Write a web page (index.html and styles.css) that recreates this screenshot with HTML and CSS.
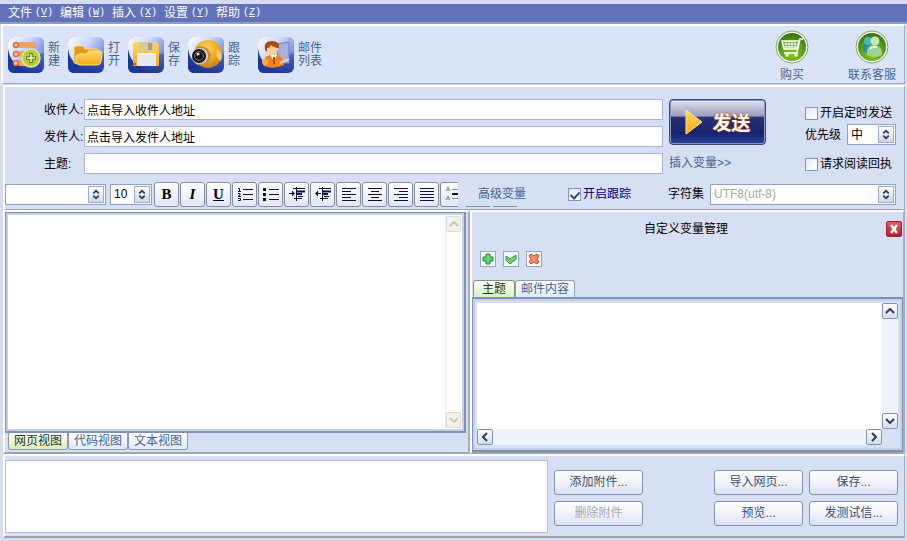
FILE: index.html
```html
<!DOCTYPE html>
<html lang="zh-CN">
<head>
<meta charset="utf-8">
<title>邮件编辑</title>
<link rel="stylesheet" href="styles.css">
</head>
<body>
<svg class="defs" aria-hidden="true">
  <defs>
    <linearGradient id="tile" x1="0.6" y1="0" x2="0.4" y2="1"><stop offset="0" stop-color="#8fa6f0"/><stop offset=".5" stop-color="#3f5cc0"/><stop offset="1" stop-color="#1c3396"/></linearGradient>
    <linearGradient id="shine" x1="0" y1="0" x2="1" y2=".6"><stop offset="0" stop-color="#fff"/><stop offset=".5" stop-color="#ccd6fb"/><stop offset="1" stop-color="#7088dc"/></linearGradient>
    <linearGradient id="gold" x1="0" y1="0" x2="0" y2="1"><stop offset="0" stop-color="#ffd964"/><stop offset="1" stop-color="#f6a915"/></linearGradient>
    <radialGradient id="ball" cx=".45" cy=".3" r=".75"><stop offset="0" stop-color="#ffd75a"/><stop offset=".6" stop-color="#eda21c"/><stop offset="1" stop-color="#b87818"/></radialGradient>
    <radialGradient id="green" cx=".5" cy=".75" r=".8"><stop offset="0" stop-color="#8cc820"/><stop offset=".6" stop-color="#55961a"/><stop offset="1" stop-color="#2f6d10"/></radialGradient>
    <g id="bg"><rect width="36" height="36" fill="url(#tile)"/><path d="M0 0H36V16Q20 18 8 30Q1 22 0 14Z" fill="url(#shine)"/><path d="M0 12Q2 24 10 28L18 36H0Z" fill="#1d3798"/></g>
    <symbol id="spin" viewBox="0 0 8 10"><path d="M1.5 4L4 1.500L6.500 4M1.500 6L4 8.500L6.500 6" fill="none" stroke="#283858" stroke-width="1.600"/></symbol>
  </defs>
</svg>

<nav class="menu">
  <button>文件<span>(<u>V</u>)</span></button>
  <button>编辑<span>(<u>W</u>)</span></button>
  <button>插入<span>(<u>X</u>)</span></button>
  <button>设置<span>(<u>Y</u>)</span></button>
  <button>帮助<span>(<u>Z</u>)</span></button>
</nav>

<header class="toolbar panel">
  <button class="tool">
    <svg viewBox="0 0 36 36"><use href="#bg"/><g fill="#f3a060"><rect x="11" y="5" width="17" height="6" rx="1"/><rect x="11" y="14" width="17" height="6" rx="1"/><rect x="11" y="23" width="15" height="6" rx="1"/></g><g fill="#f8c8a4" stroke="#e2683c" stroke-width="1.500"><circle cx="8" cy="8" r="2.500"/><circle cx="8" cy="17" r="2.500"/><circle cx="8" cy="26" r="2.500"/></g><circle cx="23" cy="21" r="9" fill="#b8cc40" stroke="#e4e99a" stroke-width="1.500"/><path d="M23 16V26M18 21H28" stroke="#577c18" stroke-width="3.500"/><path d="M23 17V25M19 21H27" stroke="#f6fbd0" stroke-width="1.500"/></svg>
    <span>新建</span>
  </button>
  <button class="tool">
    <svg viewBox="0 0 36 36"><use href="#bg"/><path d="M6 26V11Q6 9 8 9H14Q16 9 17 12H29Q31 12 31 15V26Z" fill="#e5991a" stroke="#ffdc74"/><path d="M10 27Q8 27 8 23V19Q9 17 12 17H18L21 14H32Q34 14 34 17L33 25Q32 28 29 28H12Z" fill="url(#gold)" stroke="#ffe07a"/></svg>
    <span>打开</span>
  </button>
  <button class="tool">
    <svg viewBox="0 0 36 36"><use href="#bg"/><path d="M6 5H28L31 8V29H5V6Z" fill="url(#gold)"/><rect x="11" y="5" width="15" height="9" fill="#d8c99a"/><rect x="20" y="6" width="4" height="7" fill="#a79c85"/><rect x="9" y="17" width="19" height="12" fill="#e8e8f0"/><path d="M9 17H28" stroke="#fff" stroke-width="1.500"/><path d="M5 27H8" stroke="#333"/></svg>
    <span>保存</span>
  </button>
  <button class="tool">
    <svg viewBox="0 0 36 36"><use href="#bg"/><circle cx="20" cy="17" r="14" fill="url(#ball)"/><path d="M29 12Q36 15 33 24Q29 22 28 18Z" fill="#f6c860"/><path d="M8 10Q20 7 23 18Q22 28 12 28Z" fill="#c68b35"/><circle cx="12" cy="19" r="8" fill="#d8d1c4"/><circle cx="11" cy="19" r="7" fill="#141418"/><circle cx="11" cy="19" r="4.500" fill="none" stroke="#777"/><circle cx="10" cy="17" r="1.500" fill="#dce4f8"/></svg>
    <span>跟踪</span>
  </button>
  <button class="tool wide">
    <svg viewBox="0 0 36 36"><use href="#bg"/><path d="M19 7L31 5V26H20Z" fill="#a2aee4" stroke="#7080c8"/><path d="M24 10V22M27 9V23" stroke="#cfb8a4"/><path d="M5 27Q5 20 12 18L20 18Q25 20 26 28Q15 33 6 29Z" fill="#ef8424"/><path d="M12 18L16 24L19 18Z" fill="#fff4e0"/><path d="M15 20L17 20L17 27L15 27Z" fill="#b34d13"/><circle cx="14" cy="12" r="6" fill="#ffd195"/><path d="M7 13Q5 4 14 4Q22 4 21 11Q16 11 13 8Q12 11 9 11L9 15Z" fill="#aa4c13"/><circle cx="7" cy="25" r="3" fill="#f7b049"/><path d="M22 26L31 22" stroke="#e5d1bd" stroke-width="2"/></svg>
    <span>邮件列表</span>
  </button>
  <div class="services">
    <a href="#buy"><svg viewBox="0 0 34 34"><circle cx="17" cy="17" r="16" fill="#fff" stroke="#78a858"/><circle cx="17" cy="17" r="14" fill="url(#green)"/><g fill="none" stroke="#fff" stroke-width="1.500"><path d="M28 9H25L22 23H9M7 11H24L22 19H9Z"/><path d="M8 14H23M8 17H23M11 11V19M14 11V19M17 11V19M20 11V19" stroke-width="1"/></g><circle cx="12" cy="25" r="1.800" fill="#fff"/><circle cx="21" cy="25" r="1.800" fill="#fff"/></svg>购买</a>
    <a href="#support"><svg viewBox="0 0 34 34"><circle cx="17" cy="17" r="16" fill="#fff" stroke="#78a858"/><circle cx="17" cy="17" r="14" fill="url(#green)"/><path d="M8 21Q7 14 12 14Q17 14 17 22Q12 24 8 21Z" fill="#2292a8"/><circle cx="13" cy="11" r="4" fill="#48b6c8"/><path d="M12 25Q11 15 19 15Q28 16 27 25Q19 29 12 25Z" fill="#9fd097"/><path d="M15 19Q18 16 22 17" stroke="#e8f7da" fill="none" stroke-width="2"/><circle cx="20" cy="11" r="4.500" fill="#c6e8b7"/></svg>联系客服</a>
  </div>
</header>

<form class="compose panel">
  <div class="fields">
    <label for="to">收件人:</label><input id="to" type="text" value="点击导入收件人地址">
    <label for="from">发件人:</label><input id="from" type="text" value="点击导入发件人地址">
    <label for="subject">主题:</label><input id="subject" type="text">
  </div>
  <div class="side">
    <div class="send-box">
      <button type="button" class="send"><svg viewBox="0 0 20 28"><path d="M2 2L18 14L2 26Z" fill="url(#gold)" stroke="#ffea80"/></svg><span>发送</span></button>
      <a href="#vars">插入变量&gt;&gt;</a>
    </div>
    <div class="options">
      <label class="check"><input type="checkbox">开启定时发送</label>
      <div class="priority"><label for="priority">优先级</label><span class="select"><select id="priority"><option>中</option></select><svg><use href="#spin"/></svg></span></div>
      <label class="check"><input type="checkbox">请求阅读回执</label>
    </div>
  </div>
  <div class="format">
    <span class="select font"><select aria-label="字体"><option></option></select><svg><use href="#spin"/></svg></span>
    <span class="select size"><select aria-label="字号"><option>10</option></select><svg><use href="#spin"/></svg></span>
    <div class="buttons">
      <button type="button"><b>B</b></button>
      <button type="button"><b><i>I</i></b></button>
      <button type="button"><b><u>U</u></b></button>
      <button type="button" aria-label="编号"><svg viewBox="0 0 16 14"><path d="M6 2.500H16M6 7.500H16M6 12.500H16"/><path d="M1 1.500H2.500V4M1 4.500H4M1 6.500H3V8L1 9.500H4M1 11.500H3.500V13.500H1"/></svg></button>
      <button type="button" aria-label="项目符号"><svg viewBox="0 0 16 14"><path d="M6 2.500H16M6 7.500H16M6 12.500H16"/><path d="M0 2.500H3M0 7.500H3M0 12.500H3" stroke-width="3"/></svg></button>
      <button type="button" aria-label="增加缩进"><svg viewBox="0 0 16 14"><path d="M4 1.500H16M9 9.500H14M5 11.500H13"/><path d="M8 4.500H16M8 7H13" stroke-width="2"/><path d="M0 6.500H5M7.500 0V14"/><path d="M3 3.500L6 6.500L3 9.500Z" fill="#10103c" stroke="none"/></svg></button>
      <button type="button" aria-label="减少缩进"><svg viewBox="0 0 16 14"><path d="M4 1.500H16M9 9.500H14M5 11.500H13"/><path d="M8 4.500H16M8 7H13" stroke-width="2"/><path d="M1 6.500H6M7.500 0V14"/><path d="M3 3.500L0 6.500L3 9.500Z" fill="#10103c" stroke="none"/></svg></button>
      <button type="button" aria-label="左对齐"><svg viewBox="0 0 16 14"><path d="M1 1.500H15M1 4.500H10M1 7.500H15M1 10.500H10M1 13.500H15"/></svg></button>
      <button type="button" aria-label="居中"><svg viewBox="0 0 16 14"><path d="M1 1.500H15M4 4.500H12M1 7.500H15M4 10.500H12M1 13.500H15"/></svg></button>
      <button type="button" aria-label="右对齐"><svg viewBox="0 0 16 14"><path d="M1 1.500H15M6 4.500H15M1 7.500H15M6 10.500H15M1 13.500H15"/></svg></button>
      <button type="button" aria-label="两端对齐"><svg viewBox="0 0 16 14"><path d="M1 1.500H15M1 4.500H15M1 7.500H15M1 10.500H15M1 13.500H15"/></svg></button>
      <button type="button" aria-label="分隔线"><svg viewBox="0 0 16 14"><path d="M7 2.500H14M7 11.500H14M1 4L3 0L5 4M2 3H4M1 13L3 9L5 13M2 12H4" stroke="#888"/><path d="M7 7H16" stroke-width="2"/></svg></button>
    </div>
    <a href="#advanced">高级变量</a>
    <label class="check tracking"><input type="checkbox" checked>开启跟踪</label>
    <div class="charset"><label for="charset">字符集</label><span class="select"><select id="charset" disabled><option>UTF8(utf-8)</option></select><svg><use href="#spin"/></svg></span></div>
  </div>
</form>

<main class="workspace">
  <section class="editor panel">
    <div class="frame">
      <textarea aria-label="正文"></textarea>
      <div class="scroll faded"><button aria-label="上"><svg viewBox="0 0 10 6"><path d="M1 5L5 1L9 5"/></svg></button><button aria-label="下"><svg viewBox="0 0 10 6"><path d="M1 1L5 5L9 1"/></svg></button></div>
    </div>
    <div class="tabs below"><button class="active">网页视图</button><button>代码视图</button><button>文本视图</button></div>
  </section>
  <section class="variables panel">
    <div class="title"><h2>自定义变量管理</h2><button class="close" aria-label="关闭"><svg viewBox="0 0 14 14"><path d="M4 3L10 11M10 3L4 11" stroke="#fff" stroke-width="2.500"/></svg></button></div>
    <div class="actions">
      <button aria-label="添加"><svg viewBox="0 0 12 12"><path d="M4 1H8V4H11V8H8V11H4V8H1V4H4Z" fill="#64cf7c" stroke="#1f8838"/></svg></button>
      <button aria-label="确定"><svg viewBox="0 0 12 12"><path d="M1 3L5 6L11 2V6L5 11L1 7Z" fill="#70d684" stroke="#2a9142"/></svg></button>
      <button aria-label="删除"><svg viewBox="0 0 12 12"><path d="M1 3L3 1L6 3L9 1L11 3L9 6L11 9L9 11L6 9L3 11L1 9L3 6Z" fill="#f98a68" stroke="#d04a2c"/></svg></button>
    </div>
    <div class="tabs"><button class="active">主题</button><button>邮件内容</button></div>
    <div class="frame list">
      <textarea aria-label="变量"></textarea>
      <div class="scroll"><button aria-label="上"><svg viewBox="0 0 10 6"><path d="M1 5L5 1L9 5"/></svg></button><button aria-label="下"><svg viewBox="0 0 10 6"><path d="M1 1L5 5L9 1"/></svg></button></div>
      <div class="scroll across"><button aria-label="左"><svg viewBox="0 0 6 10"><path d="M5 1L1 5L5 9"/></svg></button><button aria-label="右"><svg viewBox="0 0 6 10"><path d="M1 1L5 5L1 9"/></svg></button></div>
      <div class="corner"></div>
    </div>
  </section>
</main>

<footer class="attachments panel">
  <textarea aria-label="附件"></textarea>
  <div class="pair"><button>添加附件...</button><button disabled>删除附件</button></div>
  <div class="quad"><button>导入网页...</button><button>保存...</button><button>预览...</button><button>发测试信...</button></div>
</footer>
</body>
</html>
```
FILE: styles.css
```css
* { box-sizing: border-box; }

body {
  margin: 0;
  padding: 4px 0 3px;
  min-height: 100vh;
  display: flex;
  flex-direction: column;
  background: #d6ddf2;
  color: #000;
  font: 12px/14px "Liberation Sans", "Noto Sans CJK SC", sans-serif;
}

button, input, select, textarea { font: inherit; color: inherit; margin: 0; padding: 0; border-radius: 0; }
button { border: 0; background: none; display: flex; align-items: center; justify-content: center; }
textarea { display: block; resize: none; border: 0; background: #fff; outline: 0; }
a { color: #45658f; text-decoration: none; }
svg { display: block; fill: none; }
.defs { position: absolute; width: 0; height: 0; }

.panel {
  border: 2px solid;
  border-color: #fff #aab0b8 #a2a6aa #fff;
  background: #d7dff4;
}

.menu {
  display: flex;
  height: 20px;
  padding-left: 8px;
  background: #6272b9;
  border-bottom: 2px solid #929cc9;
  color: #fff;
}
.menu button { width: 52px; gap: 3px; justify-content: flex-start; }
.menu span { font: 10px/14px "Liberation Mono", monospace; }

.toolbar {
  display: flex;
  align-items: center;
  height: 60px;
  margin: 0 2px 1px 1px;
  padding: 0 0 0 5px;
  border-right-width: 1px;
  border-bottom-width: 1px;
  background: #dbe3f8;
  color: #45658f;
}
.tool { width: 60px; gap: 4px; justify-content: flex-start; text-align: left; }
.tool svg { width: 36px; height: 36px; flex: none; border-radius: 6px; }
.tool span { width: 12px; line-height: 13px; }
.tool.wide { width: 76px; margin-left: 10px; }
.tool.wide span { width: 24px; }
.services { display: flex; gap: 16px; margin-left: auto; }
.services a { width: 64px; display: flex; flex-direction: column; align-items: center; gap: 4px; padding-top: 2px; }
.services svg { width: 34px; height: 34px; }

.compose {
  display: grid;
  grid-template-columns: 1fr 235px;
  column-gap: 6px;
  margin: 0 2px 0 3px;
  padding-top: 12px;
  height: 126px;
}
.compose, .attachments { border-right-width: 1px; }
.fields {
  display: grid;
  grid-template-columns: 40px 1fr;
  gap: 6px 0;
  padding-left: 39px;
  align-content: start;
  align-items: center;
}
.fields label { white-space: nowrap; }
.fields input { height: 21px; width: 100%; border: 1px solid #a9b6d3; background: #fff; padding: 0 2px; }

.side { display: flex; justify-content: space-between; padding-right: 8px; }
.send-box { display: flex; flex-direction: column; gap: 11px; }
.send {
  width: 97px;
  height: 46px;
  gap: 8px;
  border: 1px solid #3b4675;
  border-radius: 4px;
  background: linear-gradient(#e2e4f0, #9a9fbd 36%, #283173 40%, #16226c 75%, #2b43a0);
  box-shadow: inset 0 0 0 1px #8f98c4;
}
.send svg { width: 20px; height: 28px; }
.send span { font: bold 19px/24px "Noto Sans CJK SC", sans-serif; color: #fff6e8; text-shadow: 0 0 1px #c8501c, 0 0 2px #c8501c; }
.options { display: flex; flex-direction: column; padding-top: 7px; width: 91px; }
.check { display: flex; align-items: center; gap: 2px; white-space: nowrap; }
.check input { appearance: none; width: 13px; height: 13px; border: 1px solid #8398b8; background: linear-gradient(135deg, #e4e9f5, #fff); }
.tracking { color: #000080; }
.tracking input:checked::after { content: ""; display: block; width: 4px; height: 7px; margin: 1px 0 0 3px; border: solid #354a78; border-width: 0 2px 2px 0; transform: rotate(42deg); }
.priority { display: flex; align-items: center; justify-content: space-between; margin: 4px 0 12px; }
.priority .select { width: 49px; }

.select { position: relative; display: block; height: 21px; }
.select select { appearance: none; width: 100%; height: 100%; padding: 0 20px 0 3px; border: 1px solid #8fa2c2; background: #fff; opacity: 1; }
.select select:disabled { color: #a9a9a3; }
.select svg { position: absolute; right: 2px; top: 2px; width: 16px; height: 17px; padding: 2px; border: 1px solid #9aaccc; background: linear-gradient(#fff, #ccd8ed); pointer-events: none; }

.format { grid-column: 1 / -1; display: flex; align-items: center; height: 27px; margin-top: 5px; padding-right: 8px; }
.format .font { width: 101px; margin-right: 4px; }
.format .size { width: 42px; margin-right: 2px; }
.format .buttons { display: flex; flex: none; gap: 1px; width: 304px; overflow: hidden; }
.buttons button {
  flex: none;
  width: 25px;
  height: 25px;
  border: 1px solid #808da2;
  border-radius: 3px;
  background: linear-gradient(#fff, #e2e8f6);
  font: 15px/18px "Liberation Serif", serif;
}
.buttons svg { width: 16px; height: 14px; stroke: #10103c; }
.format > a { position: relative; margin-left: 20px; }
.format > a::after {
  content: "";
  position: absolute;
  left: -12px;
  bottom: -6px;
  width: 51px;
  height: 1px;
  background: linear-gradient(90deg, #808da2 24px, transparent 24px 27px, #808da2 27px);
}
.format .tracking { margin: 0 auto 0 42px; }
.charset { display: flex; align-items: center; width: 228px; gap: 6px; }
.charset .select { flex: 1; }

.workspace { flex: 1; display: grid; grid-template-columns: 467fr 435fr; margin: -1px 2px 0 3px; min-height: 240px; }
.workspace .panel { display: flex; flex-direction: column; min-width: 0; }
.frame { flex: 1; display: grid; grid-template-columns: 1fr 16px; border: 1px solid #7f91b5; background: #fff; box-shadow: inset 0 0 0 2px #c5cfe5; padding: 3px; }
.frame textarea { width: 100%; height: 100%; }
.editor .frame { margin-right: 2px; border-right-width: 2px; border-bottom-width: 2px; }
.scroll { display: flex; flex-direction: column; justify-content: space-between; background: #f0f3fc; }
.scroll.faded { background: #fdfdfa; border-left: 1px solid #eeeee5; }
.scroll button { width: 16px; height: 16px; border: 1px solid #8292b2; border-radius: 2px; background: linear-gradient(#fff, #d3dcef); }
.scroll svg { width: 10px; height: 6px; stroke: #2b3c60; stroke-width: 2; }
.scroll.faded button { width: 15px; border-color: #dcdccf; background: #f2f2e9; }
.scroll.faded svg { stroke: #c6c6bb; }
.scroll.across { flex-direction: row; }
.scroll.across svg { width: 6px; height: 10px; }
.corner { background: #d7dff4; }

.tabs { display: flex; height: 17px; padding-left: 1px; color: #45658f; }
.tabs button { padding: 0 5px; border: 1px solid #8c9db9; border-bottom: 0; border-radius: 3px 3px 0 0; background: linear-gradient(#fff, #e0e9f8); }
.tabs .active { background: linear-gradient(#fff, #d8efbd); border-color: #7f9978; color: #203a20; padding: 0 8px; }
.tabs.below { padding-left: 3px; margin-bottom: 2px; }
.tabs.below button { width: 60px; padding: 0; border: 1px solid #8c9db9; border-top: 0; border-radius: 0 0 3px 3px; }

.title { display: flex; align-items: center; height: 33px; padding-right: 1px; }
.title h2 { flex: 1; margin: 0; padding-left: 14px; font: inherit; text-align: center; }
.close { width: 16px; height: 16px; border: 1px solid #a32229; border-radius: 2px; background: linear-gradient(#e5585c, #b91d27); }
.close svg { width: 14px; height: 14px; }
.actions { display: flex; gap: 7px; height: 35px; padding: 6px 8px 0; align-items: flex-start; }
.actions button { width: 16px; height: 16px; border: 1px solid #93a7b8; background: #f4faf4; }
.actions svg { width: 12px; height: 12px; }
.list { grid-template-rows: 1fr 16px; border-width: 2px 1px; padding: 4px 4px 5px; background: #d7dff4; }

.attachments { display: flex; margin: 0 2px 0 3px; padding: 4px 6px 3px 0; height: 84px; }
.attachments textarea { flex: 1; border: 1px solid #b5bed6; min-width: 0; }
.pair, .quad { display: grid; gap: 6px; align-content: center; padding: 2px 0 0 6px; }
.quad { grid-template-columns: 89px 89px; margin-left: 65px; }
.attachments button { width: 89px; height: 25px; border: 1px solid #7f93b3; border-radius: 3px; background: linear-gradient(#fff, #f0f0fb 60%, #d8e0f2); color: #38506f; }
.attachments button:disabled { color: #a9a9a3; }
```
